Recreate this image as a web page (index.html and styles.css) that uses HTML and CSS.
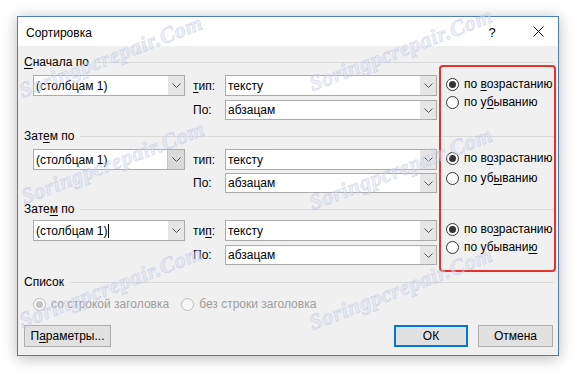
FILE: index.html
```html
<!DOCTYPE html>
<html lang="ru">
<head>
<meta charset="utf-8">
<title>Сортировка</title>
<link rel="stylesheet" href="styles.css">
</head>
<body>
<div class="page">
  <div class="dialog">
    <div class="titlebar">
      <span class="title">Сортировка</span>
      <span class="tb-btn help">?</span>
      <span class="tb-btn close"><svg width="11" height="11" viewBox="0 0 11 11"><path d="M0.5 0.5 L10.5 10.5 M10.5 0.5 L0.5 10.5" stroke="#000" stroke-width="1" fill="none"/></svg></span>
    </div>
    <div class="body">
      <section class="sort s1">
        <div class="sec-head"><span><u>С</u>начала по</span><i class="rule"></i></div>
        <div class="sort-grid">
          <div class="combo c1"><span class="val">(столбцам 1)</span><span class="drop"><svg width="9" height="5" viewBox="0 0 9 5"><path d="M0.5 0.5 L4.5 4.5 L8.5 0.5" stroke="#505050" fill="none"/></svg></span></div>
          <span class="lbl"><u>т</u>ип:</span>
          <div class="combo c2"><span class="val">тексту</span><span class="drop"><svg width="9" height="5" viewBox="0 0 9 5"><path d="M0.5 0.5 L4.5 4.5 L8.5 0.5" stroke="#505050" fill="none"/></svg></span></div>
          <div class="radios">
            <div class="radio on"><i class="dot"></i><span>по <u>в</u>озрастанию</span></div>
            <div class="radio"><i class="dot"></i><span>по у<u>б</u>ыванию</span></div>
          </div>
          <span class="lbl row2">По:</span>
          <div class="combo c2 row2"><span class="val">абзацам</span><span class="drop"><svg width="9" height="5" viewBox="0 0 9 5"><path d="M0.5 0.5 L4.5 4.5 L8.5 0.5" stroke="#505050" fill="none"/></svg></span></div>
        </div>
      </section>

      <section class="sort s2">
        <div class="sec-head"><span>Зат<u>е</u>м по</span><i class="rule"></i></div>
        <div class="sort-grid">
          <div class="combo c1 hover"><span class="val">(столбцам 1)</span><span class="drop"><svg width="9" height="5" viewBox="0 0 9 5"><path d="M0.5 0.5 L4.5 4.5 L8.5 0.5" stroke="#505050" fill="none"/></svg></span></div>
          <span class="lbl">тип:</span>
          <div class="combo c2"><span class="val">тексту</span><span class="drop"><svg width="9" height="5" viewBox="0 0 9 5"><path d="M0.5 0.5 L4.5 4.5 L8.5 0.5" stroke="#505050" fill="none"/></svg></span></div>
          <div class="radios">
            <div class="radio on"><i class="dot"></i><span>по в<u>о</u>зрастанию</span></div>
            <div class="radio"><i class="dot"></i><span>по уб<u>ы</u>ванию</span></div>
          </div>
          <span class="lbl row2">По:</span>
          <div class="combo c2 row2"><span class="val">абзацам</span><span class="drop"><svg width="9" height="5" viewBox="0 0 9 5"><path d="M0.5 0.5 L4.5 4.5 L8.5 0.5" stroke="#505050" fill="none"/></svg></span></div>
        </div>
      </section>

      <section class="sort s3">
        <div class="sec-head"><span>Зате<u>м</u> по</span><i class="rule"></i></div>
        <div class="sort-grid">
          <div class="combo c1"><span class="val">(столбцам 1)<i class="caret"></i></span><span class="drop"><svg width="9" height="5" viewBox="0 0 9 5"><path d="M0.5 0.5 L4.5 4.5 L8.5 0.5" stroke="#505050" fill="none"/></svg></span></div>
          <span class="lbl">ти<u>п</u>:</span>
          <div class="combo c2"><span class="val">тексту</span><span class="drop"><svg width="9" height="5" viewBox="0 0 9 5"><path d="M0.5 0.5 L4.5 4.5 L8.5 0.5" stroke="#505050" fill="none"/></svg></span></div>
          <div class="radios">
            <div class="radio on"><i class="dot"></i><span>по во<u>з</u>растанию</span></div>
            <div class="radio"><i class="dot"></i><span>по убывани<u>ю</u></span></div>
          </div>
          <span class="lbl row2">По:</span>
          <div class="combo c2 row2"><span class="val">абзацам</span><span class="drop"><svg width="9" height="5" viewBox="0 0 9 5"><path d="M0.5 0.5 L4.5 4.5 L8.5 0.5" stroke="#505050" fill="none"/></svg></span></div>
        </div>
      </section>

      <section class="list">
        <div class="sec-head"><span>Список</span><i class="rule"></i></div>
        <div class="list-row">
          <div class="radio disabled on"><i class="dot"></i><span>со строкой заголовка</span></div>
          <div class="radio disabled"><i class="dot"></i><span>без строки заголовка</span></div>
        </div>
      </section>

      <div class="buttons">
        <button class="btn params">П<u>а</u>раметры...</button>
        <span class="spacer"></span>
        <button class="btn ok">ОК</button>
        <button class="btn cancel">Отмена</button>
      </div>
    </div>
  </div>

  <div class="annot"></div>

  <span class="wm" style="left:24px;top:80px">Soringpcrepair.Com</span>
  <span class="wm" style="left:314px;top:73px">Soringpcrepair.Com</span>
  <span class="wm" style="left:26px;top:186px">Soringpcrepair.Com</span>
  <span class="wm" style="left:314px;top:192px">Soringpcrepair.Com</span>
  <span class="wm" style="left:24px;top:310px">Soringpcrepair.Com</span>
  <span class="wm" style="left:314px;top:312px">Soringpcrepair.Com</span>
</div>
</body>
</html>
```

FILE: styles.css
```css
html, body {
  margin: 0;
  background: #ffffff;
}
body {
  font-family: "Liberation Sans", Arial, sans-serif;
  font-size: 12px;
  color: #000;
}
u { text-decoration: underline; text-underline-offset: 2px; }

.page {
  position: relative;
  width: 581px;
  height: 378px;
  padding: 16px 0 0 17px;
  box-sizing: border-box;
  overflow: hidden;
}

.dialog {
  width: 542px;
  height: 340px;
  box-sizing: border-box;
  border: 1px solid #4a80b8;
  background: #f0f0f0;
  box-shadow: 0 2px 14px rgba(0, 0, 0, 0.28);
  display: flex;
  flex-direction: column;
}

.titlebar {
  height: 29px;
  background: #fff;
  display: flex;
  align-items: center;
  flex: none;
}
.title {
  flex: 1;
  padding-left: 8px;
  padding-top: 3px;
  font-size: 12px;
}
.tb-btn {
  width: 46px;
  height: 29px;
  display: flex;
  align-items: center;
  justify-content: center;
}
.help { font-size: 13px; padding-top: 2px; box-sizing: border-box; }
.close { width: 43px; padding-left: 3px; box-sizing: border-box; }

.body {
  flex: 1;
  padding: 9px 4px 0 6px;
  display: flex;
  flex-direction: column;
}

.sec-head {
  display: flex;
  align-items: center;
  height: 14px;
  gap: 6px;
}
.rule {
  flex: 1;
  height: 1px;
  background: #d9d9d9;
}

.sort-grid {
  margin: 6px 0 0 9px;
  display: grid;
  grid-template-columns: 160px 32px 212px 1fr;
  grid-template-rows: 21px 20px;
  row-gap: 4px;
  align-items: center;
}
.s2 { margin-top: 9px; }
.s3 { margin-top: 9px; }
.s2 .sort-grid { row-gap: 3px; }
.s3 .sort-grid { margin-top: 4px; }

.combo {
  height: 21px;
  box-sizing: border-box;
  border: 1px solid #ababab;
  background: #fff;
  display: flex;
  align-items: stretch;
}
.combo.row2 { height: 20px; }
.c1 { width: 152px; grid-column: 1; grid-row: 1; }
.c2 { width: 212px; grid-column: 3; grid-row: 1; }
.c2.row2 { grid-row: 2; }
.val {
  flex: 1;
  padding-left: 2px;
  display: flex;
  align-items: center;
  white-space: nowrap;
}
.drop {
  width: 16px;
  background: #e6e6e6;
  display: flex;
  align-items: center;
  justify-content: center;
  flex: none;
}
.hover .drop { background: #d9d9d9; border-left: 1px solid #c4c4c4; }
.caret {
  display: inline-block;
  width: 1px;
  height: 14px;
  background: #000;
  margin-left: 1px;
}

.lbl { grid-column: 2; grid-row: 1; }
.lbl.row2 { grid-row: 2; }

.radios {
  grid-column: 4;
  grid-row: 1 / span 2;
  align-self: start;
  padding-left: 9px;
  display: flex;
  flex-direction: column;
}
.radio {
  display: flex;
  align-items: center;
  gap: 5px;
  height: 18px;
  white-space: nowrap;
}
.dot {
  width: 13px;
  height: 13px;
  box-sizing: border-box;
  border: 1px solid #333;
  border-radius: 50%;
  background: #fff;
  display: flex;
  align-items: center;
  justify-content: center;
  flex: none;
}
.radio.on .dot::after {
  content: "";
  width: 7px;
  height: 7px;
  border-radius: 50%;
  background: #333;
}
.s2 .radios { margin-top: -1px; }
.s2 .radio { height: 20px; }

.radio.disabled { color: #9e9e9e; }
.radio.disabled .dot { border-color: #bcbcbc; background: #f7f7f7; }
.radio.disabled.on .dot::after { background: #c4c4c4; }

.list { margin-top: 10px; }
.list-row {
  margin: 6px 0 0 9px;
  display: flex;
  gap: 12px;
}

.buttons {
  margin-top: 12px;
  display: flex;
  align-items: center;
  padding-right: 1px;
}
.spacer { flex: 1; }
.btn {
  height: 22px;
  box-sizing: border-box;
  border: 1px solid #adadad;
  background: #e1e1e1;
  font: inherit;
  color: #000;
  padding: 0;
  display: flex;
  align-items: center;
  justify-content: center;
}
.params { width: 87px; }
.ok { width: 74px; border: 2px solid #0078d7; margin-right: 10px; }
.cancel { width: 75px; }

.annot {
  position: absolute;
  left: 439px;
  top: 65px;
  width: 117px;
  height: 207px;
  box-sizing: border-box;
  border: 2px solid #e2332c;
  border-radius: 4px;
  pointer-events: none;
}

.wm {
  position: absolute;
  font-family: "Liberation Serif", "DejaVu Serif", serif;
  font-style: italic;
  font-weight: bold;
  font-size: 22px;
  line-height: 22px;
  letter-spacing: 0.6px;
  white-space: nowrap;
  color: rgba(218, 224, 240, 0.5);
  -webkit-text-stroke: 0.6px rgba(160, 172, 208, 0.4);
  transform-origin: 0 100%;
  transform: rotate(-21deg);
  pointer-events: none;
}
```
